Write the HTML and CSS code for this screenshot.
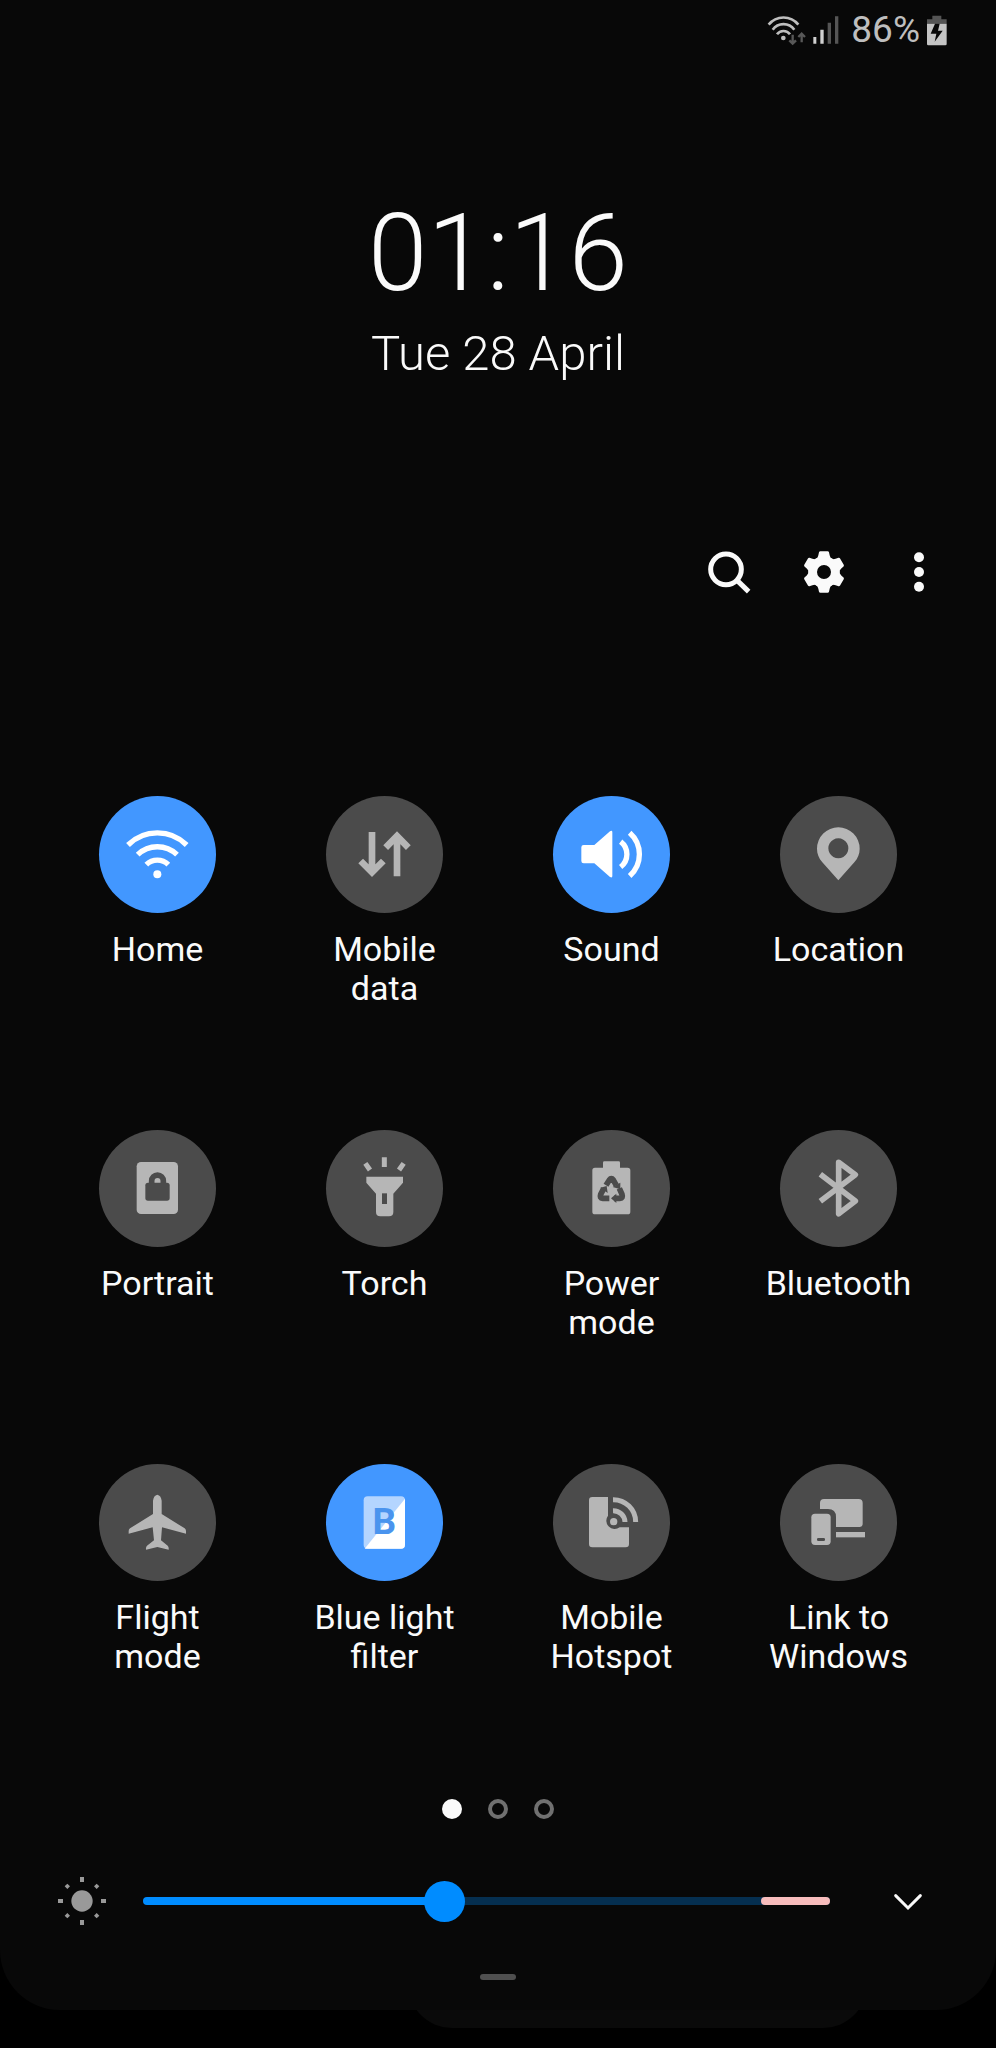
FILE: index.html
```html
<!DOCTYPE html>
<html lang="en-GB">
<head>
    <meta charset="UTF-8">
    <meta name="viewport" content="width=device-width, initial-scale=1.0">
    <title>Quick settings</title>
    <link rel="stylesheet" href="styles.css">
</head>
<body>
    <main class="panel">
        <div class="status">
            <svg class="status-wifi" viewBox="70 35 126 99" aria-hidden="true">
                <g fill="none" stroke="#bebebe" stroke-width="8">
                    <path d="M81 67A57 57 0 0 1 170 67M93 82A40 40 0 0 1 158 82M106 96A24 24 0 0 1 145 96"/>
                </g>
                <circle cx="125" cy="107" r="7" fill="#bebebe"/>
                <path d="M153 97V123M143 114L153 124L163 114M180 120V96M170 104L180 94L190 104" fill="none" stroke="#585858" stroke-width="7"/>
            </svg>
            <svg class="status-signal" viewBox="212 44 84 90" aria-hidden="true">
                <path d="M216 110h9v20h-9zM237 88h10v42h-10z" fill="#d0d0d0"/>
                <path d="M259 67h10v63h-10zM281 48h10v82h-10z" fill="#555"/>
            </svg>
            <span class="status-percent">86%</span>
            <svg class="status-battery" viewBox="555 40 66 93" aria-hidden="true">
                <path d="M574 42h27v11h16v13h-59V53h16z" fill="#555"/>
                <path d="M558 66h59v61q0 4-4 4h-51q-4 0-4-4z" fill="#c4c4c4"/>
                <path d="M582 66h14l-5 21h14l-24 33l5-24h-17z" fill="#080808"/>
            </svg>
        </div>

        <header class="clock">
            <h1 class="clock-time">01:16</h1>
            <p class="clock-date">Tue 28 April</p>
        </header>

        <nav class="actions">
            <button class="action" aria-label="Search">
                <svg viewBox="0 0 144 144">
                    <path d="M97 98L131 131" stroke="#fafafa" stroke-width="15"/>
                    <circle cx="63" cy="64" r="46" fill="none" stroke="#fafafa" stroke-width="15"/>
                </svg>
            </button>
            <button class="action" aria-label="Settings">
                <svg viewBox="-72 -72 144 144">
                    <circle r="34" fill="none" stroke="#fafafa" stroke-width="26"/>
                    <g fill="#fafafa">
                        <path id="tooth" d="M-25 -38Q-18 -42 -17 -50L-15 -59Q-14 -62 -11 -62H11Q14 -62 15 -59L17 -50Q18 -42 25 -38z"/>
                        <use href="#tooth" transform="rotate(60)"/>
                        <use href="#tooth" transform="rotate(120)"/>
                        <use href="#tooth" transform="rotate(180)"/>
                        <use href="#tooth" transform="rotate(240)"/>
                        <use href="#tooth" transform="rotate(300)"/>
                    </g>
                </svg>
            </button>
            <button class="action" aria-label="More options">
                <svg viewBox="0 0 144 144" fill="#fafafa">
                    <circle cx="72" cy="28" r="15"/>
                    <circle cx="72" cy="72" r="15"/>
                    <circle cx="72" cy="116" r="15"/>
                </svg>
            </button>
        </nav>

        <section class="tiles">
            <button class="tile on">
                <span class="tile-icon">
                    <svg viewBox="0 0 351 351">
                        <path d="M87 147A125 125 0 0 1 263 147M116 176A85 85 0 0 1 234 176M142 206A47 47 0 0 1 208 206" fill="none" stroke="currentColor" stroke-width="16"/>
                        <circle cx="175" cy="235" r="12" fill="currentColor"/>
                    </svg>
                </span>
                <span class="tile-label">Home</span>
            </button>
            <button class="tile">
                <span class="tile-icon">
                    <svg viewBox="0 0 351 351">
                        <path d="M138 108V228M104 195L138 229L172 195M213 241V121M179 155L213 120L247 155" fill="none" stroke="currentColor" stroke-width="20"/>
                    </svg>
                </span>
                <span class="tile-label">Mobile<br>data</span>
            </button>
            <button class="tile on">
                <span class="tile-icon">
                    <svg viewBox="0 0 351 351">
                        <path d="M92 147H124L171 106Q178 102 178 109V240Q178 247 171 243L124 202H92Q85 202 85 195V154Q85 147 92 147z" fill="currentColor"/>
                        <path d="M203 137A48 48 0 0 1 203 213M230 110A87 87 0 0 1 230 240" fill="none" stroke="currentColor" stroke-width="16"/>
                    </svg>
                </span>
                <span class="tile-label">Sound</span>
            </button>
            <button class="tile">
                <span class="tile-icon">
                    <svg viewBox="0 0 351 351">
                        <path fill-rule="evenodd" d="M175 253L127 199C116 186 111 173 111 158A64 64 0 0 1 239 158C239 173 234 186 223 199zM175 127a30 30 0 1 0 .1 0z" fill="currentColor"/>
                    </svg>
                </span>
                <span class="tile-label">Location</span>
            </button>

            <button class="tile">
                <span class="tile-icon">
                    <svg viewBox="0 0 351 351">
                        <rect x="113" y="96" width="124" height="156" rx="13" fill="currentColor"/>
                        <rect x="139" y="158" width="73" height="54" rx="8" fill="#4b4b4b"/>
                        <path d="M158 160V153A17 17 0 0 1 193 153V160" fill="none" stroke="#4b4b4b" stroke-width="17"/>
                    </svg>
                </span>
                <span class="tile-label">Portrait</span>
            </button>
            <button class="tile">
                <span class="tile-icon">
                    <svg viewBox="0 0 351 351">
                        <path d="M175 82V111M118 100L132 120M233 100L219 120" stroke="currentColor" stroke-width="15"/>
                        <path d="M121 140H231V158L202 191V246Q202 259 189 259H163Q150 259 150 246V191L121 158z" fill="currentColor"/>
                        <path d="M168 190h15v32h-15z" fill="#4b4b4b"/>
                    </svg>
                </span>
                <span class="tile-label">Torch</span>
            </button>
            <button class="tile">
                <span class="tile-icon">
                    <svg viewBox="0 0 351 351">
                        <path d="M154 94H197Q201 94 201 98V113H224Q232 113 232 121V245Q232 253 224 253H126Q118 253 118 245V121Q118 113 126 113H150V98Q150 94 154 94z" fill="currentColor"/>
                        <path d="M159 166L169 150Q175 142 181 150L190 166M152 176L143 193Q139 205 149 205H169M199 175L207 193Q211 205 201 205H183" fill="none" stroke="#4b4b4b" stroke-width="17"/>
                        <path d="M179 171L202 158L202 178zM142 173L161 168L164 189zM190 191V219L174 205z" fill="#4b4b4b"/>
                    </svg>
                </span>
                <span class="tile-label">Power<br>mode</span>
            </button>
            <button class="tile">
                <span class="tile-icon">
                    <svg viewBox="0 0 351 351">
                        <path d="M121 133L226 213L176 251V97L226 134L121 214" fill="none" stroke="currentColor" stroke-width="17" stroke-linejoin="round"/>
                    </svg>
                </span>
                <span class="tile-label">Bluetooth</span>
            </button>

            <button class="tile">
                <span class="tile-icon">
                    <svg viewBox="0 0 351 351">
                        <path d="M175 92Q186 94 188 110V150L257 193Q261 196 261 201V209L189 190L186 229L206 245Q210 249 209 257L175 249L141 257Q140 249 144 245L165 229L161 190L89 209V201Q89 196 93 193L162 150V110Q164 94 175 92z" fill="currentColor"/>
                    </svg>
                </span>
                <span class="tile-label">Flight<br>mode</span>
            </button>
            <button class="tile on">
                <span class="tile-icon">
                    <svg viewBox="0 0 351 351">
                        <rect x="113" y="97" width="124" height="157" rx="12" fill="#b4d5ff"/>
                        <path d="M237 104V242Q237 254 225 254H116z" fill="#fff"/>
                        <text class="filter-letter" x="175" y="211" text-anchor="middle">B</text>
                    </svg>
                </span>
                <span class="tile-label">Blue light<br>filter</span>
            </button>
            <button class="tile">
                <span class="tile-icon">
                    <svg viewBox="0 0 351 351">
                        <path d="M118 99H165V155A25 25 0 0 0 200 190H228V240Q228 250 218 250H118Q108 250 108 240V109Q108 99 118 99z" fill="currentColor"/>
                        <circle cx="182" cy="173" r="11" fill="currentColor"/>
                        <path d="M180 140A35 35 0 0 1 216 174M180 107A67 67 0 0 1 248 174" fill="none" stroke="currentColor" stroke-width="15"/>
                    </svg>
                </span>
                <span class="tile-label">Mobile<br>Hotspot</span>
            </button>
            <button class="tile">
                <span class="tile-icon">
                    <svg viewBox="0 0 351 351" fill="currentColor">
                        <path d="M132 105H236Q248 105 248 117V179Q248 189 238 189H168V159Q168 135 144 135H120V117Q120 105 132 105z"/>
                        <path d="M168 204h87v16h-87z"/>
                        <rect x="94" y="149" width="58" height="94" rx="11"/>
                        <rect x="111" y="222" width="24" height="9" rx="4" fill="#4b4b4b"/>
                    </svg>
                </span>
                <span class="tile-label">Link to<br>Windows</span>
            </button>
        </section>

        <div class="pages">
            <button class="page current" aria-label="Page 1"></button>
            <button class="page" aria-label="Page 2"></button>
            <button class="page" aria-label="Page 3"></button>
        </div>

        <div class="brightness">
            <svg class="sun" viewBox="-72 -72 144 144" aria-hidden="true">
                <circle r="32" fill="#999"/>
                <g fill="#999">
                    <path d="M-6 -72h12v15h-12zM-6 57h12v15h-12zM-72 -6h15v12h-15zM57 -6h15v12h-15z"/>
                    <path d="M-44 -52l8 8l-8 8l-8 -8zM44 -52l8 8l-8 8l-8 -8zM-44 36l8 8l-8 8l-8 -8zM44 36l8 8l-8 8l-8 -8z"/>
                </g>
            </svg>
            <div class="slider">
                <input class="slider-input" type="range" min="0" max="255" value="111" aria-label="Brightness">
                <span class="slider-limit"></span>
            </div>
            <button class="expand" aria-label="Show more">
                <svg viewBox="0 0 96 60">
                    <path d="M11 14L48 51L85 14" fill="none" stroke="#fafafa" stroke-width="9" stroke-linecap="round"/>
                </svg>
            </button>
        </div>

        <div class="handle"></div>
    </main>
    <div class="shade"></div>
</body>
</html>
```
FILE: styles.css
```css
* {
    box-sizing: border-box;
}
body {
    margin: 0;
    min-height: 100vh;
    background: #000;
    color: #fafafa;
    font-family: Roboto, sans-serif;
}
button {
    padding: 0;
    border: none;
    background: none;
    color: inherit;
    font: inherit;
    cursor: pointer;
}
svg {
    display: block;
}
.panel {
    position: relative;
    z-index: 1;
    display: flex;
    flex-direction: column;
    padding-bottom: 30px;
    background: #080808;
    border-radius: 0 0 60px 60px;
}

/* status bar */
.status {
    display: flex;
    justify-content: flex-end;
    align-items: center;
    height: 60px;
    padding-right: 48px;
    color: #bebebe;
}
.status-wifi {
    width: 42px;
    height: 33px;
    margin-right: 5px;
}
.status-signal {
    width: 28px;
    height: 30px;
    margin-right: 11px;
}
.status-percent {
    font-size: 37px;
    line-height: 40px;
    margin-right: 6px;
}
.status-battery {
    width: 22px;
    height: 31px;
}

/* clock */
.clock {
    padding-top: 134px;
    text-align: center;
    font-weight: 300;
}
.clock-time {
    margin: 0;
    font-size: 107px;
    font-weight: 300;
    line-height: 120px;
}
.clock-date {
    margin: 10px 0 0;
    font-size: 49px;
    line-height: 60px;
}

/* search, settings, menu */
.actions {
    display: flex;
    justify-content: flex-end;
    gap: 47px;
    padding: 164px 53px 0 0;
}
.action svg {
    width: 48px;
    height: 48px;
}

/* toggles */
.tiles {
    display: grid;
    grid-template-columns: repeat(4, 1fr);
    row-gap: 122px;
    padding: 200px 44px 0;
}
.tile {
    display: flex;
    flex-direction: column;
    align-items: center;
    gap: 17px;
}
.tile-icon {
    width: 117px;
    height: 117px;
    border-radius: 50%;
    background: #4b4b4b;
    color: #b6b6b6;
}
.tile.on .tile-icon {
    background: #4297ff;
    color: #fff;
}
.tile-label {
    font-size: 34px;
    line-height: 39px;
}
.filter-letter {
    font-size: 111px;
    font-weight: 700;
    fill: #4a94ee;
}

/* page dots */
.pages {
    display: flex;
    justify-content: center;
    gap: 26px;
    padding-top: 123px;
}
.page {
    width: 20px;
    height: 20px;
    border: 4px solid #707070;
    border-radius: 50%;
}
.page.current {
    border-color: #fafafa;
    background: #fafafa;
}

/* brightness */
.brightness {
    display: flex;
    align-items: center;
    padding: 58px 72px 0 58px;
}
.sun {
    width: 48px;
    height: 48px;
}
.slider {
    position: relative;
    flex: 1;
    display: flex;
    align-items: center;
    margin: 0 62px 0 37px;
}
.slider-input {
    width: 100%;
    height: 42px;
    margin: 0;
    appearance: none;
    background: none;
}
.slider-input::-webkit-slider-runnable-track {
    height: 8px;
    border-radius: 4px;
    background: linear-gradient(to right, #008cff 44%, #052f50 44%);
}
.slider-input::-webkit-slider-thumb {
    appearance: none;
    width: 41px;
    height: 41px;
    margin-top: -16px;
    border-radius: 50%;
    background: #008cff;
}
.slider-limit {
    position: absolute;
    right: 0;
    width: 10%;
    height: 8px;
    border-radius: 4px;
    background: #f7bcbc;
    pointer-events: none;
}
.expand svg {
    width: 32px;
    height: 20px;
}

/* drag handle */
.handle {
    align-self: center;
    width: 36px;
    height: 6px;
    margin-top: 49px;
    border-radius: 3px;
    background: #4f4f4f;
}

/* edge of the notification card behind the panel */
.shade {
    height: 60px;
    margin: -42px 13% 0 41%;
    border-radius: 0 0 44px 44px;
    background: #0a0a0a;
}
```
